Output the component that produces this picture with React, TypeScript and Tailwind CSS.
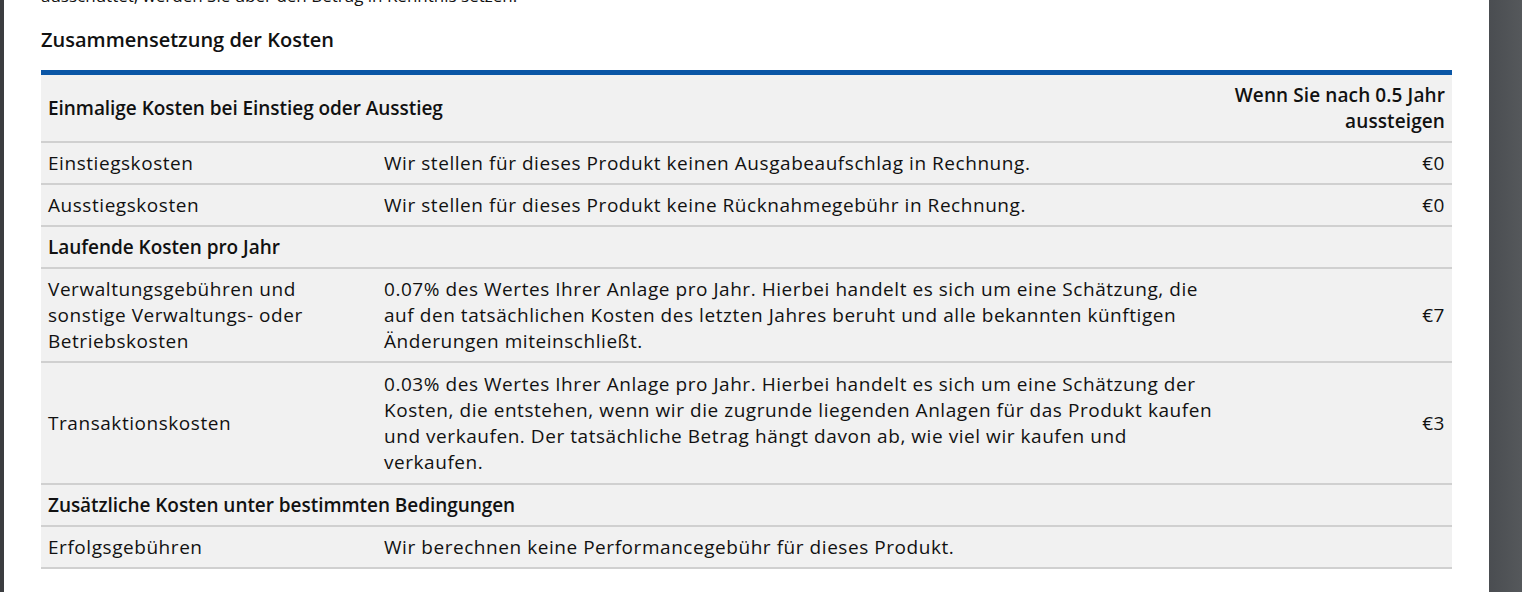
import React from "react";

const font = { fontFamily: "'Open Sans', 'Noto Sans', sans-serif" };

function Lines({ lines }: { lines: string[] }) {
  return (
    <>
      {lines.map((l, i) => (
        <span key={i} className="block whitespace-nowrap">
          {l}
        </span>
      ))}
    </>
  );
}

function Row({
  label,
  desc,
  value,
  extra,
}: {
  label: React.ReactNode;
  desc?: React.ReactNode;
  value?: string;
  extra?: boolean;
}) {
  return (
    <div
      className={
        "grid grid-cols-[336px_850px_1fr] border-b-2 border-[#d0d0d0] items-center " +
        (extra ? "py-[1px]" : "")
      }
    >
      <div className="px-[7px] py-[7px]">{label}</div>
      <div className="px-[7px] py-[7px]">{desc}</div>
      <div className="px-[7px] py-[7px] text-right">{value}</div>
    </div>
  );
}

function Section({ title }: { title: string }) {
  return (
    <div className="border-b-2 border-[#d0d0d0] px-[7px] py-[7px] font-semibold tracking-[-0.05px]">
      {title}
    </div>
  );
}

export default function App() {
  return (
    <div
      className="flex w-[1522px] h-[592px] overflow-hidden bg-white text-[#111] text-[19px] leading-[26px] tracking-[0.55px]"
      style={font}
    >
      <div className="w-[4px] shrink-0 bg-[#3b3d40]" />
      <div className="w-[1485px] shrink-0 pl-[37px] pr-[37px]">
        <div className="-mt-[14px] whitespace-nowrap text-[17px] leading-[20px] tracking-[0px]">
          ausschüttet, werden Sie über den Betrag in Kenntnis setzen.
        </div>
        <div className="mt-[21px] font-semibold text-[20px] tracking-[0px]">
          Zusammensetzung der Kosten
        </div>
        <div className="mt-[17px] border-t-[5px] border-[#0a56a6] bg-[#f1f1f1]">
          <div className="grid grid-cols-[1186px_1fr] border-b-2 border-[#d0d0d0] items-center font-semibold tracking-[-0.05px]">
            <div className="px-[7px] py-[7px]">Einmalige Kosten bei Einstieg oder Ausstieg</div>
            <div className="px-[7px] py-[7px] text-right tracking-[0.1px]">
              Wenn Sie nach 0.5 Jahr
              <br />
              aussteigen
            </div>
          </div>
          <Row
            label="Einstiegskosten"
            desc="Wir stellen für dieses Produkt keinen Ausgabeaufschlag in Rechnung."
            value="€0"
          />
          <Row
            label="Ausstiegskosten"
            desc="Wir stellen für dieses Produkt keine Rücknahmegebühr in Rechnung."
            value="€0"
          />
          <Section title="Laufende Kosten pro Jahr" />
          <Row
            label={
              <Lines
                lines={[
                  "Verwaltungsgebühren und",
                  "sonstige Verwaltungs- oder",
                  "Betriebskosten",
                ]}
              />
            }
            desc={
              <Lines
                lines={[
                  "0.07% des Wertes Ihrer Anlage pro Jahr. Hierbei handelt es sich um eine Schätzung, die",
                  "auf den tatsächlichen Kosten des letzten Jahres beruht und alle bekannten künftigen",
                  "Änderungen miteinschließt.",
                ]}
              />
            }
            value="€7"
          />
          <Row
            extra
            label="Transaktionskosten"
            desc={
              <Lines
                lines={[
                  "0.03% des Wertes Ihrer Anlage pro Jahr. Hierbei handelt es sich um eine Schätzung der",
                  "Kosten, die entstehen, wenn wir die zugrunde liegenden Anlagen für das Produkt kaufen",
                  "und verkaufen. Der tatsächliche Betrag hängt davon ab, wie viel wir kaufen und",
                  "verkaufen.",
                ]}
              />
            }
            value="€3"
          />
          <Section title="Zusätzliche Kosten unter bestimmten Bedingungen" />
          <Row
            label="Erfolgsgebühren"
            desc="Wir berechnen keine Performancegebühr für dieses Produkt."
          />
        </div>
      </div>
      <div className="flex-1 bg-gradient-to-r from-[#4a4d51] to-[#55585b]" />
    </div>
  );
}
